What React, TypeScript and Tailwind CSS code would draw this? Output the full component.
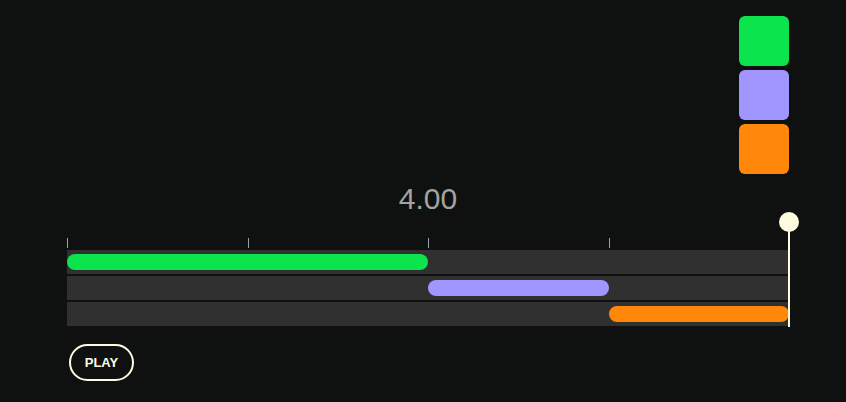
const swatches = ['bg-[#0be44d]', 'bg-[#a196ff]', 'bg-[#ff880b]']

const clips = [
  { row: 0, start: 0, end: 2, color: 'bg-[#0be44d]' },
  { row: 1, start: 2, end: 3, color: 'bg-[#a196ff]' },
  { row: 2, start: 3, end: 4, color: 'bg-[#ff880b]' },
]

const WIDTH = 722
const DURATION = 4
const pxPerSec = WIDTH / DURATION

export default function App() {
  return (
    <div className="w-[846px] h-[402px] bg-[#0f1110] overflow-hidden font-['Liberation_Sans',Arial,sans-serif]">
      {/* Color swatches */}
      <div className="flex flex-col items-end gap-1 pt-4 pr-[57px]">
        {swatches.map((c) => (
          <div key={c} className={`w-[50px] h-[50px] rounded-md ${c}`} />
        ))}
      </div>

      {/* Current time */}
      <div className="ml-[67px] w-[722px] mt-[10px] h-[30px] leading-[30px] text-[30px] text-center text-[#a3a3a3]">
        4.00
      </div>

      {/* Timeline */}
      <div className="relative ml-[67px] w-[722px] mt-6">
        <div className="flex h-[10px]">
          {[0, 1, 2, 3].map((i) => (
            <div key={i} className="flex-1">
              <div className="w-px h-[10px] bg-[#9a9cb0]" />
            </div>
          ))}
        </div>

        <div className="mt-[2px] flex flex-col gap-[2px]">
          {clips.map((clip) => (
            <div key={clip.row} className="flex items-center h-6 bg-[#303030]">
              <div
                className={`h-4 rounded-full ${clip.color}`}
                style={{ marginLeft: clip.start * pxPerSec, width: (clip.end - clip.start) * pxPerSec }}
              />
            </div>
          ))}
        </div>

        {/* Playhead */}
        <div className="absolute top-[-16px] left-[721px] w-[2px] h-[105px] bg-[#fffbe0]" />
        <div className="absolute top-[-26px] left-[712px] w-5 h-5 rounded-full bg-[#fffbe0]" />
      </div>

      <button className="ml-[69px] mt-[18px] w-[65px] h-[37px] rounded-full border-2 border-[#fffbe0] text-[#fffbe0] text-[13px] font-bold">
        PLAY
      </button>
    </div>
  )
}
